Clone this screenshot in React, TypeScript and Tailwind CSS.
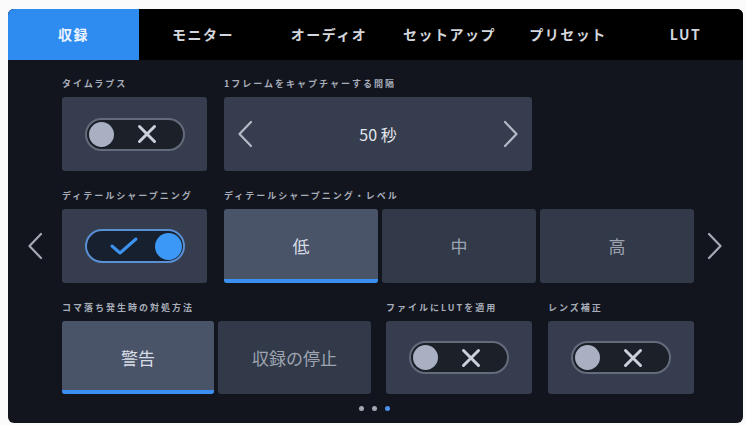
import React from "react";

const jp = { fontFamily: '"Noto Sans CJK JP", "Noto Sans", sans-serif' };

const tabs = [
  { label: "収録", w: "w-[131px]", active: true },
  { label: "モニター", w: "w-[128px]" },
  { label: "オーディオ", w: "w-[124px]" },
  { label: "セットアップ", w: "w-[117px]" },
  { label: "プリセット", w: "w-[120px]" },
  { label: "LUT", w: "flex-1" },
];

function Chevron({ dir, className }: { dir: "left" | "right"; className?: string }) {
  return (
    <svg width="16" height="28" viewBox="0 0 16 28" className={className}>
      <path
        d={dir === "left" ? "M14 2 L2.5 14 L14 26" : "M2 2 L13.5 14 L2 26"}
        fill="none"
        stroke="currentColor"
        strokeWidth="2.2"
        strokeLinecap="round"
        strokeLinejoin="round"
      />
    </svg>
  );
}

function Label({ children }: { children: React.ReactNode }) {
  return (
    <div className="mb-[7px] h-[12px] text-[9px] leading-[12px] font-bold tracking-[2px] whitespace-nowrap text-[#a7adb9]">
      {children}
    </div>
  );
}

function Toggle({ on }: { on?: boolean }) {
  if (on) {
    return (
      <div className="flex h-[34px] w-[100px] items-center rounded-full border-2 border-[#5a8fd4] bg-[#16202f] pr-[1px] pl-[22px]">
        <svg width="30" height="20" viewBox="0 0 30 20">
          <path d="M3 10 L11 17 L27 3" fill="none" stroke="#3d92f0" strokeWidth="3" strokeLinecap="round" strokeLinejoin="round" />
        </svg>
        <div className="ml-auto h-[27px] w-[27px] rounded-full bg-[#3b98f6]" />
      </div>
    );
  }
  return (
    <div className="flex h-[33px] w-[100px] items-center rounded-full border-2 border-[#646c7c] bg-[#1b2029] pl-[2px]">
      <div className="h-[25px] w-[25px] rounded-full bg-[#a8b0c2]" />
      <svg width="20" height="20" viewBox="0 0 20 20" className="ml-[23px]">
        <path d="M2.5 2.5 L17.5 17.5 M17.5 2.5 L2.5 17.5" fill="none" stroke="#cbd0da" strokeWidth="3" strokeLinecap="round" />
      </svg>
    </div>
  );
}

function Card({ w, children, h = "h-[74px]" }: { w: string; children: React.ReactNode; h?: string }) {
  return (
    <div className={`flex ${w} ${h} items-center justify-center rounded-[3px] bg-[#353d4e]`}>
      {children}
    </div>
  );
}

function Segment({
  label,
  active,
  w,
  h = "h-[74px]",
}: {
  label: string;
  active?: boolean;
  w: string;
  h?: string;
}) {
  return (
    <div
      className={`relative flex ${w} ${h} items-center justify-center overflow-hidden rounded-[3px] text-[17px] ${
        active ? "bg-[#4a5469] text-[#d8dce4]" : "bg-[#323a4a] text-[#9ea4b0]"
      }`}
    >
      {label}
      {active && <div className="absolute right-0 bottom-0 left-0 h-[4px] bg-[#3a8ff0]" />}
    </div>
  );
}

export default function App() {
  return (
    <div className="h-[425px] w-[746px] bg-[#fbfbfb] pt-[9px] pl-[8px]" style={jp}>
      <div className="flex h-[414px] w-[735px] flex-col overflow-hidden rounded-[6px] bg-[#12151d]">
        {/* tab bar */}
        <div className="flex h-[51px] bg-black">
          {tabs.map((t) => (
            <div
              key={t.label}
              className={`flex ${t.w} items-center justify-center text-[14px] font-bold tracking-[1.5px] ${
                t.active ? "bg-[#2e8cf0] text-[#eaf3ff]" : "text-[#d3d6dc]"
              }`}
            >
              {t.label}
            </div>
          ))}
        </div>

        <div className="flex flex-1">
          <div className="flex w-[54px] items-center justify-center pt-[8px] text-[#a3a9b3]">
            <Chevron dir="left" />
          </div>

          <div className="flex w-[632px] flex-col pt-[18px]">
            {/* row 1 */}
            <div className="flex">
              <div className="flex flex-col">
                <Label>タイムラプス</Label>
                <Card w="w-[145px]">
                  <Toggle />
                </Card>
              </div>
              <div className="ml-[17px] flex flex-col">
                <Label>1フレームをキャプチャーする間隔</Label>
                <div className="flex h-[74px] w-[308px] items-center justify-between rounded-[3px] bg-[#353d4e] px-[13px] text-[#b4bac5]">
                  <Chevron dir="left" />
                  <span className="text-[16px] text-[#e4e7ec]">50 秒</span>
                  <Chevron dir="right" />
                </div>
              </div>
            </div>

            {/* row 2 */}
            <div className="mt-[19px] flex">
              <div className="flex flex-col">
                <Label>ディテールシャープニング</Label>
                <Card w="w-[145px]">
                  <Toggle on />
                </Card>
              </div>
              <div className="ml-[17px] flex flex-col">
                <Label>ディテールシャープニング・レベル</Label>
                <div className="flex gap-[4px]">
                  <Segment label="低" active w="w-[154px]" />
                  <Segment label="中" w="w-[154px]" />
                  <Segment label="高" w="w-[154px]" />
                </div>
              </div>
            </div>

            {/* row 3 */}
            <div className="mt-[19px] flex">
              <div className="flex flex-col">
                <Label>コマ落ち発生時の対処方法</Label>
                <div className="flex gap-[4px]">
                  <Segment label="警告" active w="w-[152px]" h="h-[73px]" />
                  <Segment label="収録の停止" w="w-[153px]" h="h-[73px]" />
                </div>
              </div>
              <div className="ml-[15px] flex flex-col">
                <Label>ファイルにLUTを適用</Label>
                <Card w="w-[146px]" h="h-[73px]">
                  <Toggle />
                </Card>
              </div>
              <div className="ml-[16px] flex flex-col">
                <Label>レンズ補正</Label>
                <Card w="w-[146px]" h="h-[73px]">
                  <Toggle />
                </Card>
              </div>
            </div>

            {/* page dots */}
            <div className="mt-[12px] flex justify-center gap-[8px] pr-[8px]">
              <div className="h-[5px] w-[5px] rounded-full bg-[#a3a9b3]" />
              <div className="h-[5px] w-[5px] rounded-full bg-[#a3a9b3]" />
              <div className="h-[5px] w-[5px] rounded-full bg-[#4a92ec]" />
            </div>
          </div>

          <div className="flex w-[49px] items-center justify-center pt-[8px] pr-[8px] text-[#a3a9b3]">
            <Chevron dir="right" />
          </div>
        </div>
      </div>
    </div>
  );
}
